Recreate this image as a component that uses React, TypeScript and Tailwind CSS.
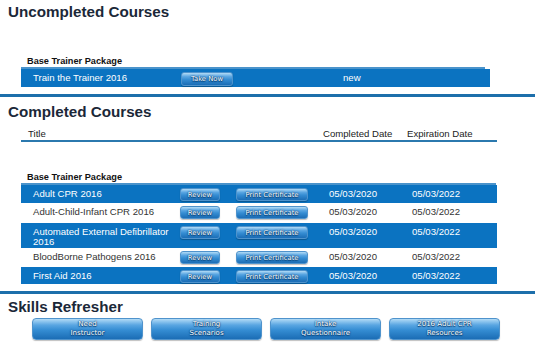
import React from "react";

const btn =
  "flex items-center justify-center rounded-[3px] border border-[#4f93cc] bg-[linear-gradient(#b2dbf6,#5aa6e2_30%,#358dd3_55%,#1b6db5)] text-white font-['DejaVu_Sans',sans-serif] text-[6.8px] leading-[8px] [text-shadow:0_0_1px_#083f72,0_0_2px_#083f72,0_1px_1px_#083f72] shadow-[0_1px_1px_rgba(0,0,0,0.25)]";

const rows = [
  { t: "Adult CPR 2016", blue: true, h: "h-[18px]" },
  { t: "Adult-Child-Infant CPR 2016", blue: false, h: "h-[20px]" },
  { t: "Automated External Defibrillator 2016", blue: true, h: "h-[25px]" },
  { t: "BloodBorne Pathogens 2016", blue: false, h: "h-[19px]" },
  { t: "First Aid 2016", blue: true, h: "h-[17px]" },
];

function Heading({ children, mt }: { children: React.ReactNode; mt: string }) {
  return (
    <h1 className={`${mt} pl-[8px] text-[15.2px] font-bold leading-[18px] text-[#1b2838]`}>
      {children}
    </h1>
  );
}

function Sep() {
  return <div className="h-[3px] w-full bg-[#1d6fab]" />;
}

export default function App() {
  return (
    <div className="w-[535px] h-[350px] overflow-hidden bg-white font-['Liberation_Sans',Arial,sans-serif]">
      <Heading mt="pt-[3px]">Uncompleted Courses</Heading>

      <div className="mt-[34px] ml-[21px]">
        <div className="w-[464px] h-[14px] border-b-2 border-[#4a93cb] pl-[6px] text-[9.2px] font-bold leading-[12px] text-[#111]">
          Base Trainer Package
        </div>
        <div className="flex w-[469px] h-[18px] bg-[#0b73c1] text-white text-[9.6px]">
          <div className="w-[160px] pl-[12px] leading-[18px]">Train the Trainer 2016</div>
          <div className="w-[162px] pt-[3px]">
            <div className={`${btn} w-[52px] h-[14px]`}>Take Now</div>
          </div>
          <div className="leading-[18px]">new</div>
        </div>
      </div>

      <div className="mt-[7px]">
        <Sep />
      </div>

      <Heading mt="mt-[6px]">Completed Courses</Heading>

      <div className="ml-[21px] w-[476px]">
        <div className="mt-[7px] flex h-[14px] border-b-2 border-[#2b79ae] text-[9.6px] leading-[11px] text-[#222]">
          <div className="w-[302px] pl-[7px]">Title</div>
          <div className="w-[84px]">Completed Date</div>
          <div>Expiration Date</div>
        </div>

        <div className="mt-[29px] w-[475px] h-[14px] border-b-2 border-[#4a93cb] pl-[6px] text-[9.2px] font-bold leading-[12px] text-[#111]">
          Base Trainer Package
        </div>

        {rows.map((r) => (
          <div
            key={r.t}
            className={`flex ${r.h} text-[9.6px] leading-[10px] ${
              r.blue ? "bg-[#0b73c1] text-white" : "bg-white text-[#333]"
            }`}
          >
            <div className="w-[159px] pl-[12px] pr-[4px] pt-[4px]">{r.t}</div>
            <div className="w-[56px] pt-[3px]">
              <div className={`${btn} w-[40px] h-[13px]`}>Review</div>
            </div>
            <div className="w-[93px] pt-[3px]">
              <div className={`${btn} w-[72px] h-[13px]`}>Print Certificate</div>
            </div>
            <div className="w-[83px] pt-[4px]">05/03/2020</div>
            <div className="pt-[4px]">05/03/2022</div>
          </div>
        ))}
      </div>

      <div className="mt-[7px]">
        <Sep />
      </div>

      <Heading mt="mt-[4px]">Skills Refresher</Heading>

      <div className="mt-[2px] ml-[32px] flex gap-[8px]">
        {[
          ["Need", "Instructor"],
          ["Training", "Scenarios"],
          ["Intake", "Questionnaire"],
          ["2016 Adult CPR", "Resources"],
        ].map(([a, b]) => (
          <div key={a} className={`${btn} w-[111px] h-[22px] flex-col rounded-[4px] text-[7px] leading-[9px]`}>
            <span>{a}</span>
            <span>{b}</span>
          </div>
        ))}
      </div>
    </div>
  );
}
